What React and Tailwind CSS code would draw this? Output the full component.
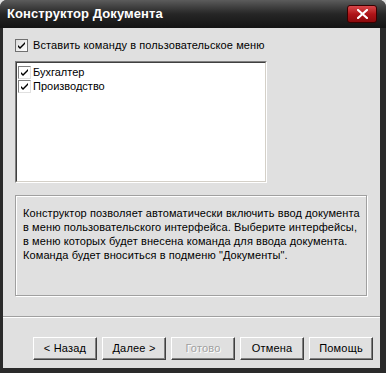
import { useState } from 'react';

const font = { fontFamily: '"Liberation Sans", Arial, sans-serif' };

const Check = () => (
  <svg width="9" height="9" viewBox="0 0 9 9" className="block">
    <path d="M1 4 L3 6 L8 1 L8 3 L3 8 L1 6 Z" fill="#000" />
  </svg>
);

const Button = ({ children, disabled }) => (
  <button
    className={
      'w-[64px] h-[23px] bg-[#e0e0e0] border border-t-white border-l-white border-r-[#404040] border-b-[#404040] shadow-[inset_-1px_-1px_0_#808080] text-[11px] tracking-[0.2px] ' +
      (disabled ? 'text-[#a0a0a0] [text-shadow:1px_1px_0_#fff]' : 'text-black')
    }
  >
    {children}
  </button>
);

export default function App() {
  const [insert, setInsert] = useState(true);
  const [items, setItems] = useState([
    { name: 'Бухгалтер', on: true },
    { name: 'Производство', on: true },
  ]);

  const toggle = (i) =>
    setItems(items.map((it, j) => (j === i ? { ...it, on: !it.on } : it)));

  return (
    <div style={font} className="w-[386px] h-[373px] bg-[#e0e0e0] flex flex-col select-none">
      {/* Window frame */}
      <div className="flex-1 flex flex-col bg-[#2a2a2a] rounded-t-[7px] overflow-hidden">
        {/* Title bar */}
        <div className="h-[28px] flex items-center justify-between pl-[7px] pr-[9px] bg-gradient-to-b from-[#5c5c5c] via-[#262626] to-[#141414]">
          <span className="text-white font-bold text-[13px] tracking-[0.1px]">Конструктор Документа</span>
          <div className="w-[30px] h-[18px] rounded-[3px] border border-[#3a0000] bg-gradient-to-b from-[#d8464a] via-[#b01418] to-[#8c0a0c] flex items-center justify-center">
            <svg width="11" height="10" viewBox="0 0 11 10">
              <path d="M1 1 L10 9 M10 1 L1 9" stroke="#fff" strokeWidth="2.2" strokeLinecap="square" />
            </svg>
          </div>
        </div>

        {/* Client area */}
        <div className="flex-1 ml-[3px] mr-[6px] mb-[5px] bg-[#e0e0e0] flex flex-col">
          <div className="pl-[12px] pr-[11px] pt-[11px]">
            <label className="flex items-center gap-[5px] h-[13px] cursor-pointer" onClick={() => setInsert(!insert)}>
              <span className="w-[13px] h-[13px] border border-[#707070] bg-gradient-to-br from-[#dcdcdc] to-white flex items-center justify-center">
                {insert && <Check />}
              </span>
              <span className="text-[11px] tracking-[0.1px] text-black leading-none">Вставить команду в пользовательское меню</span>
            </label>

            {/* List box */}
            <div className="mt-[9px] w-[252px] h-[122px] border border-t-[#808080] border-l-[#808080] border-r-white border-b-white">
              <div className="w-full h-full bg-white border border-t-[#404040] border-l-[#404040] border-r-[#d4d0c8] border-b-[#d4d0c8] pt-[2px] pl-[1px]">
                {items.map((it, i) => (
                  <div key={it.name} className="flex items-center h-[14px] gap-[2px] cursor-pointer" onClick={() => toggle(i)}>
                    <span className="w-[13px] h-[13px] border border-t-[#808080] border-l-[#808080] border-r-[#e0e0e0] border-b-[#e0e0e0] bg-white flex items-center justify-center">
                      {it.on && <Check />}
                    </span>
                    <span className="text-[11px] text-black leading-none">{it.name}</span>
                  </div>
                ))}
              </div>
            </div>

            {/* Info panel */}
            <div className="mt-[12px] w-[352px] h-[101px] border border-[#a0a0a0] shadow-[inset_1px_1px_0_#fff,1px_1px_0_#fff] px-[7px] pt-[10px]">
              <p className="text-[11px] leading-[14px] tracking-[0.1px] text-black whitespace-nowrap">
                Конструктор позволяет автоматически включить ввод документа
                <br />в меню пользовательского интерфейса. Выберите интерфейсы,
                <br />в меню которых будет внесена команда для ввода документа.
                <br />Команда будет вноситься в подменю "Документы".
              </p>
            </div>
          </div>

          {/* Separator */}
          <div className="mt-[20px] border-t border-[#a0a0a0] border-b border-b-white" />

          {/* Buttons */}
          <div className="mt-[19px] pl-[30px] flex gap-[5px]">
            <Button>&lt; Назад</Button>
            <Button>Далее &gt;</Button>
            <Button disabled>Готово</Button>
            <Button>Отмена</Button>
            <Button>Помощь</Button>
          </div>
        </div>
      </div>
    </div>
  );
}
